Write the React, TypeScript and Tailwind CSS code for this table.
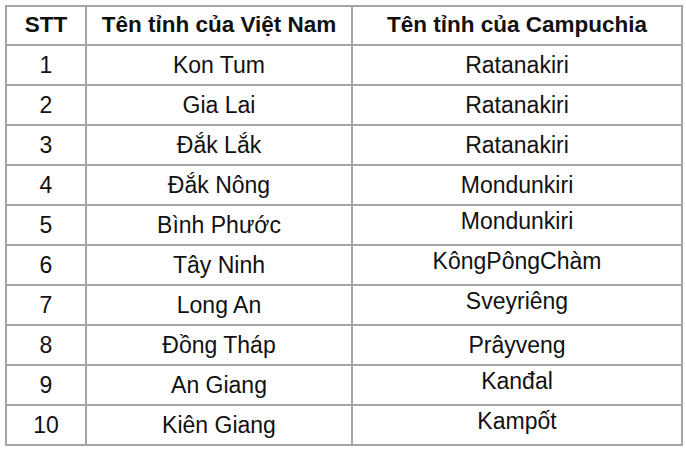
import React from "react";

const rows = [
    { stt: "1", vn: "Kon Tum", kh: "Ratanakiri", lift: false },
    { stt: "2", vn: "Gia Lai", kh: "Ratanakiri", lift: false },
    { stt: "3", vn: "Đắk Lắk", kh: "Ratanakiri", lift: false },
    { stt: "4", vn: "Đắk Nông", kh: "Mondunkiri", lift: false },
    { stt: "5", vn: "Bình Phước", kh: "Mondunkiri", lift: true },
    { stt: "6", vn: "Tây Ninh", kh: "KôngPôngChàm", lift: true },
    { stt: "7", vn: "Long An", kh: "Sveyriêng", lift: true },
    { stt: "8", vn: "Đồng Tháp", kh: "Prâyveng", lift: false },
    { stt: "9", vn: "An Giang", kh: "Kanđal", lift: true },
    { stt: "10", vn: "Kiên Giang", kh: "Kampốt", lift: true },
];

export default function App() {
    return (
        <div
            className="w-[686px] h-[450px] bg-white pt-[5px] pl-[5px] text-[#111]"
            style={{ fontFamily: '"Liberation Sans", Arial, sans-serif' }}
        >
            <table className="table-fixed border-collapse w-[676px] text-[23px] leading-none">
                <colgroup>
                    <col className="w-[80px]" />
                    <col className="w-[266px]" />
                    <col className="w-[330px]" />
                </colgroup>
                <thead>
                    <tr className="h-[39px] text-[22.5px]">
                        <th className="border-2 border-[#a5a5a5] font-bold">STT</th>
                        <th className="border-2 border-[#a5a5a5] font-bold">Tên tỉnh của Việt Nam</th>
                        <th className="border-2 border-[#a5a5a5] font-bold">Tên tỉnh của Campuchia</th>
                    </tr>
                </thead>
                <tbody>
                    {rows.map(r => (
                        <tr key={r.stt} className="h-[40px]">
                            <td className="border-2 border-[#a5a5a5] text-center">{r.stt}</td>
                            <td className="border-2 border-[#a5a5a5] text-center">{r.vn}</td>
                            <td className={r.lift
                                ? "border-2 border-[#a5a5a5] text-center pb-[8px]"
                                : "border-2 border-[#a5a5a5] text-center"}
                            >
                                {r.kh}
                            </td>
                        </tr>
                    ))}
                </tbody>
            </table>
        </div>
    );
}
